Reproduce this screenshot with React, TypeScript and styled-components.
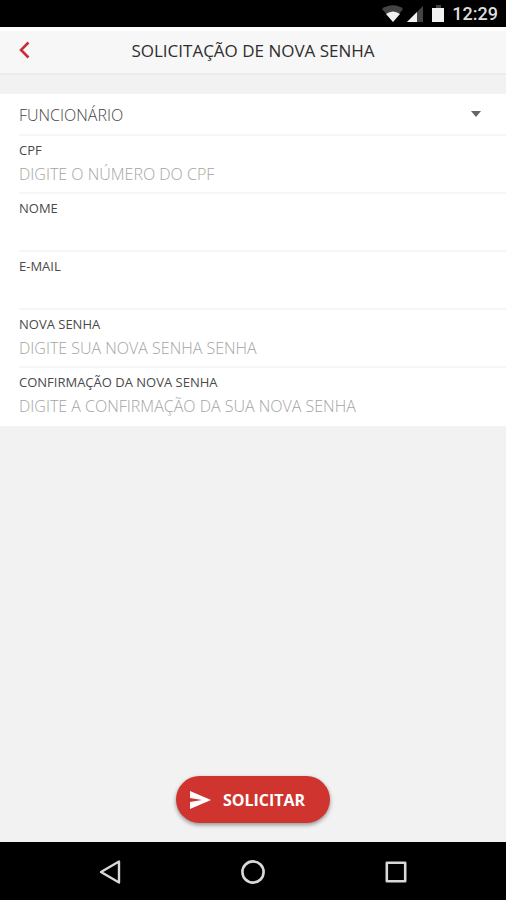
import React from "react";
import styled, { createGlobalStyle } from "styled-components";

const GlobalStyle = createGlobalStyle`
  *, *::before, *::after { box-sizing: border-box; }
  body { margin: 0; background: #f2f2f2; }
  body, button, input, select { font-family: "Open Sans", "Noto Sans", sans-serif; }
`;

const Screen = styled.div`
  display: flex;
  flex-direction: column;
  min-height: 100vh;
  background: #f2f2f2;
`;

const StatusBar = styled.div`
  display: flex;
  align-items: center;
  justify-content: flex-end;
  height: 27px;
  padding-right: 8px;
  background: #000;
  color: #dedede;
`;

const StatusIcons = styled.svg`
  display: block;
  margin-right: 7px;
`;

const Clock = styled.time`
  font: 500 18px/26px Roboto, sans-serif;
`;

const Header = styled.header`
  display: grid;
  grid-template-columns: 50px 1fr 50px;
  align-items: center;
  height: 48px;
  border-top: 4px solid #fdfdfd;
  border-bottom: 2px solid #ebebeb;
  background: #f7f7f7;
`;

const BackButton = styled.button`
  display: flex;
  align-items: center;
  height: 42px;
  padding: 0 0 4px 19px;
  border: 0;
  background: none;
  color: #c62f35;
`;

const Title = styled.h1`
  margin: 0;
  padding-bottom: 2px;
  color: #2e2e2e;
  font-size: 17px;
  font-weight: 500;
  line-height: 24px;
  text-align: center;
  white-space: nowrap;
`;

const Form = styled.form`
  display: flex;
  flex: 1;
  flex-direction: column;
  padding-top: 19px;
`;

const Fields = styled.div`
  padding-left: 19px;
  background: #fff;
`;

const SelectRow = styled.div`
  display: flex;
  align-items: center;
  height: 42px;
  padding-right: 24px;
  border-bottom: 2px solid #f6f6f6;
`;

const ProfileSelect = styled.select`
  flex: 1;
  height: 40px;
  padding: 2px 0 0;
  border: 0;
  outline: 0;
  appearance: none;
  background: none;
  color: #444;
  font-size: 16px;
  font-weight: 300;
`;

const Field = styled.div`
  display: flex;
  flex-direction: column;
  height: 58px;
  padding-top: 5px;
  border-bottom: 2px solid #f6f6f6;

  &:last-child { border-bottom-color: #fff; }
`;

const Label = styled.label`
  color: #4a4a4a;
  font-size: 13px;
  font-weight: 400;
  line-height: 18px;
`;

const Input = styled.input`
  height: 30px;
  padding: 0;
  border: 0;
  outline: 0;
  background: none;
  color: #444;
  font-size: 16px;
  font-weight: 300;

  &::placeholder { color: #a4a4a4; opacity: 1; }
`;

const Actions = styled.div`
  display: flex;
  justify-content: center;
  margin-top: auto;
  padding-bottom: 19px;
`;

const SubmitButton = styled.button`
  display: flex;
  align-items: center;
  gap: 12px;
  height: 47px;
  padding: 0 25px 0 14px;
  border: 0;
  border-radius: 24px;
  background: #d0342e;
  box-shadow: 0 2px 4px rgba(0, 0, 0, 0.4);
  color: #fff;
  font-size: 16px;
  font-weight: 700;
`;

const NavBar = styled.nav`
  display: flex;
  justify-content: center;
  gap: 95px;
  height: 58px;
  padding-top: 2px;
  background: #000;
`;

const NavButton = styled.button`
  display: flex;
  align-items: center;
  justify-content: center;
  width: 48px;
  padding: 0;
  border: 0;
  background: none;
  color: #d8d8d8;
`;

const fields = [
  { id: "cpf", label: "CPF", type: "text", placeholder: "DIGITE O NÚMERO DO CPF" },
  { id: "nome", label: "NOME", type: "text", placeholder: "" },
  { id: "email", label: "E-MAIL", type: "email", placeholder: "" },
  { id: "senha", label: "NOVA SENHA", type: "password", placeholder: "DIGITE SUA NOVA SENHA SENHA" },
  { id: "confirmacao", label: "CONFIRMAÇÃO DA NOVA SENHA", type: "password", placeholder: "DIGITE A CONFIRMAÇÃO DA SUA NOVA SENHA" },
];

export default function App() {
  return (
    <Screen>
      <GlobalStyle />
      <StatusBar>
        <StatusIcons width="65" height="20" viewBox="0 0 65 20" aria-hidden="true">
          <path d="M2 5C8 0 18 0 23 5L13 18Z" fill="#444" />
          <path d="M6 10Q13 5 20 10L13 18Z" fill="#f2f2f2" />
          <path d="M43 2V18H27Z" fill="#444" />
          <path d="M37 8V18H27Z" fill="#f2f2f2" />
          <path d="M56 1h5v3h-5z" fill="#444" />
          <path d="M52 4h12v14H52z" fill="#f2f2f2" />
        </StatusIcons>
        <Clock>12:29</Clock>
      </StatusBar>
      <Header>
        <BackButton type="button" aria-label="Voltar">
          <svg width="11" height="18" viewBox="0 0 11 18" fill="none" stroke="currentColor" strokeWidth="2.6" aria-hidden="true">
            <path d="M9.5 1.5L2 9L9.5 16.5" />
          </svg>
        </BackButton>
        <Title>SOLICITAÇÃO DE NOVA SENHA</Title>
      </Header>
      <Form onSubmit={(e) => e.preventDefault()}>
        <Fields>
          <SelectRow>
            <ProfileSelect aria-label="Perfil" defaultValue="funcionario">
              <option value="funcionario">FUNCIONÁRIO</option>
            </ProfileSelect>
            <svg width="12" height="8" viewBox="0 0 12 8" aria-hidden="true">
              <path d="M1 1H11L6 7Z" fill="#666" />
            </svg>
          </SelectRow>
          {fields.map((f) => (
            <Field key={f.id}>
              <Label htmlFor={f.id}>{f.label}</Label>
              <Input id={f.id} type={f.type} placeholder={f.placeholder} />
            </Field>
          ))}
        </Fields>
        <Actions>
          <SubmitButton type="submit">
            <svg width="21" height="18" viewBox="0 0 21 18" fill="currentColor" aria-hidden="true">
              <path d="M0 0L21 9L0 18V11L12 9L0 7Z" />
            </svg>
            SOLICITAR
          </SubmitButton>
        </Actions>
      </Form>
      <NavBar aria-label="Sistema">
        <NavButton type="button" aria-label="Voltar à tela anterior">
          <svg width="24" height="26" viewBox="0 0 24 26" fill="none" stroke="currentColor" strokeWidth="2.4" strokeLinejoin="round" aria-hidden="true">
            <path d="M21 2.5V23.5L3 13Z" />
          </svg>
        </NavButton>
        <NavButton type="button" aria-label="Início">
          <svg width="26" height="26" viewBox="0 0 26 26" fill="none" stroke="currentColor" strokeWidth="2.6" aria-hidden="true">
            <circle cx="13" cy="13" r="10.6" />
          </svg>
        </NavButton>
        <NavButton type="button" aria-label="Aplicativos recentes">
          <svg width="22" height="22" viewBox="0 0 22 22" fill="none" stroke="currentColor" strokeWidth="2.6" strokeLinejoin="round" aria-hidden="true">
            <path d="M1.8 1.8H20.2V20.2H1.8Z" />
          </svg>
        </NavButton>
      </NavBar>
    </Screen>
  );
}
